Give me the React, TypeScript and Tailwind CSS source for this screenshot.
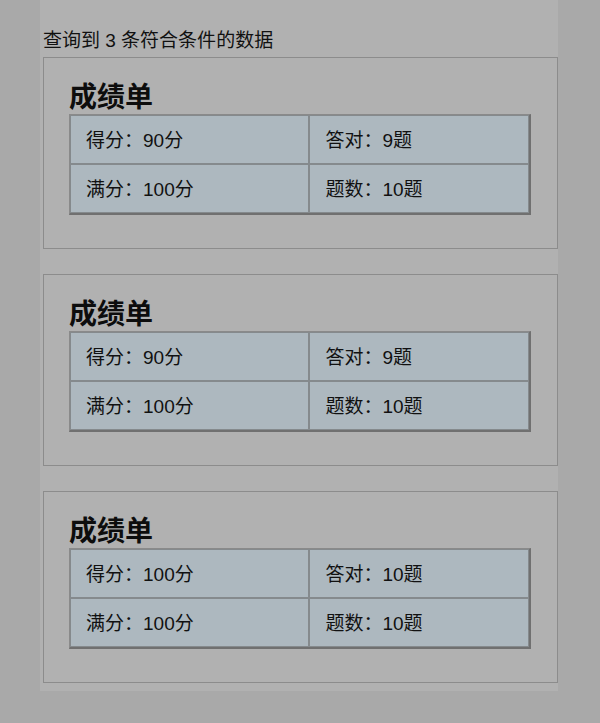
import React from 'react';

interface Report {
  score: string;
  correct: string;
  full: string;
  total: string;
}

const reports: Report[] = [
  { score: '90分', correct: '9题', full: '100分', total: '10题' },
  { score: '90分', correct: '9题', full: '100分', total: '10题' },
  { score: '100分', correct: '10题', full: '100分', total: '10题' },
];

const font = { fontFamily: '"Liberation Sans", "Noto Sans CJK SC", sans-serif' };

function Cell({ children, wide }: { children: React.ReactNode; wide?: boolean }) {
  return (
    <td
      className={`h-[49px] border border-[#858a8d] pl-[15px] pt-[4px] text-[19px] text-[#111] ${
        wide ? 'w-[240px]' : 'w-[220px]'
      }`}
    >
      {children}
    </td>
  );
}

function ReportCard({ report }: { report: Report }) {
  return (
    <div className="border border-[#8c8c8c] bg-[#b1b1b1] pt-[24px] pb-[33px] pl-[25px] pr-[25px]">
      <h2 className="text-[28px] leading-[32px] font-bold text-[#0d0d0d]">成绩单</h2>
      <table className="w-[462px] border-separate border-spacing-0 border-t border-l border-r-2 border-b-2 border-t-[#8a8a8a] border-l-[#8a8a8a] border-r-[#707070] border-b-[#707070] bg-[#adb8bf]">
        <tbody>
          <tr>
            <Cell wide>得分：{report.score}</Cell>
            <Cell>答对：{report.correct}</Cell>
          </tr>
          <tr>
            <Cell wide>满分：{report.full}</Cell>
            <Cell>题数：{report.total}</Cell>
          </tr>
        </tbody>
      </table>
    </div>
  );
}

export default function App() {
  return (
    <div className="min-h-[723px] w-[600px] bg-[#a9a9a9]" style={font}>
      <div className="ml-[40px] w-[518px] bg-[#b1b1b1] pl-[3px] pt-[29px] pb-[8px]">
        <div className="mb-[4px] text-[19px] leading-[24px] text-[#111]">查询到 3 条符合条件的数据</div>
        <div className="flex w-[515px] flex-col gap-[25px]">
          {reports.map((r, i) => (
            <ReportCard key={i} report={r} />
          ))}
        </div>
      </div>
    </div>
  );
}
